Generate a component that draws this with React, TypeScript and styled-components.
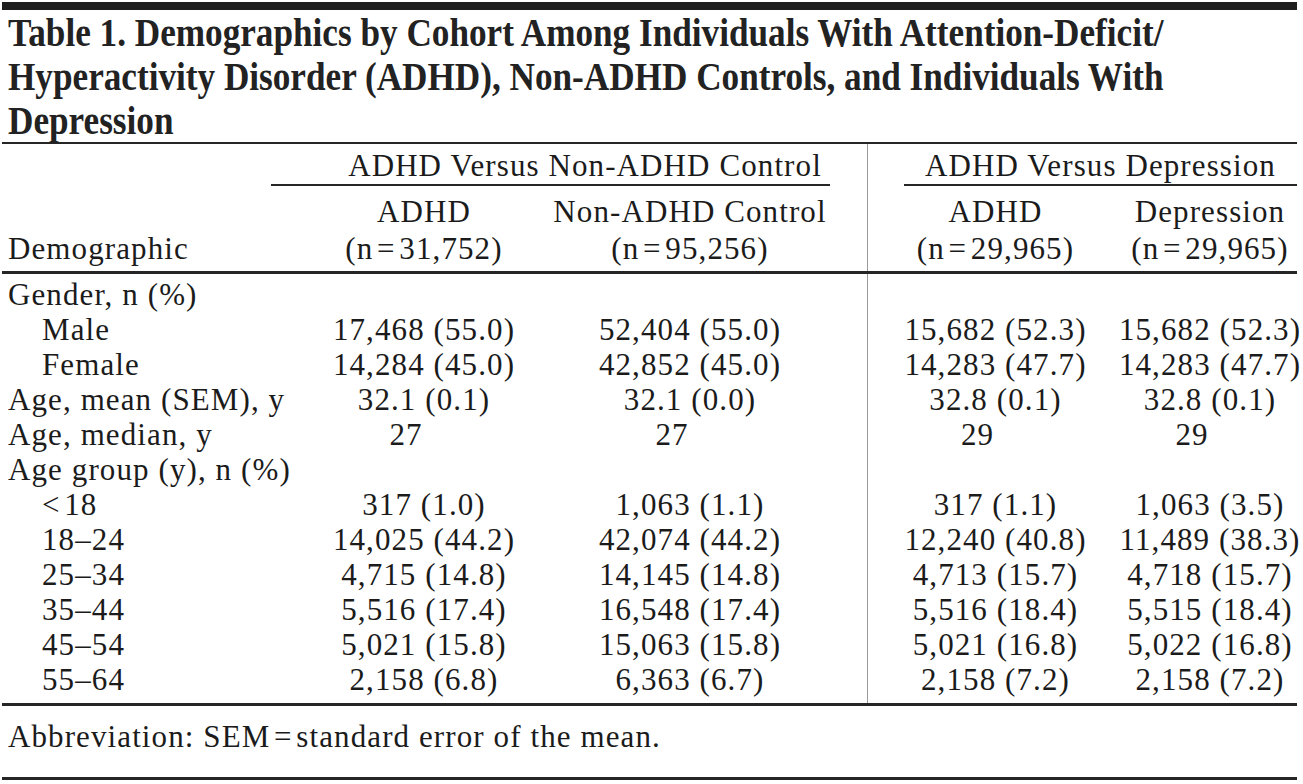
import styled, { createGlobalStyle } from "styled-components";

const GlobalStyle = createGlobalStyle`
  html, body {
    margin: 0;
    padding: 0;
    background: #ffffff;
  }
  body {
    font-family: "Liberation Serif", "Times New Roman", serif;
    color: #1b1b1b;
  }
`;

// label | ADHD | Non-ADHD | ADHD | Depression
const COLUMNS = "269px 306px 290px 256px 174px";

const Page = styled.div`
  width: 1295px;
  margin-left: 2px;
  padding-top: 2px;
  font-size: 31px;
  letter-spacing: 1.1px;
`;

const TopBar = styled.div`
  height: 8px;
  background: #1e1e1e;
`;

const Title = styled.h1`
  margin: 0;
  padding-left: 7px;
  font-size: 41px;
  font-weight: 700;
  line-height: 44px;
  letter-spacing: 0;
  white-space: nowrap;
  color: #222;
  transform: scaleX(0.858);
  transform-origin: left top;
`;

const TitleLine = styled.span`
  display: block;
`;

const Rule = styled.div<{ $weight: number }>`
  height: ${(p) => p.$weight}px;
  background: #262626;
`;

const HeadGrid = styled.div`
  display: grid;
  grid-template-columns: ${COLUMNS};
`;

const GroupCell = styled.div<{ $divided?: boolean }>`
  grid-column: ${(p) => (p.$divided ? "4 / 6" : "2 / 4")};
  padding: 4px ${(p) => (p.$divided ? "0" : "37px")} 4px ${(p) => (p.$divided ? "36px" : "0")};
  border-left: ${(p) => (p.$divided ? "1px solid #9a9a9a" : "none")};
`;

const GroupLabel = styled.div<{ $offset?: number }>`
  line-height: 35px;
  text-align: center;
  padding-left: ${(p) => p.$offset ?? 0}px;
  border-bottom: 2px solid #262626;
  padding-bottom: 1px;
`;

const Blank = styled.div``;

const DemoLabel = styled.div`
  grid-column: 1;
  display: flex;
  align-items: flex-end;
  padding: 0 0 4px 6px;
  line-height: 37px;
`;

const ColHead = styled.div<{ $divided?: boolean; $trail?: number }>`
  display: flex;
  flex-direction: column;
  align-items: center;
  padding: 3px ${(p) => p.$trail ?? 0}px 4px 0;
  line-height: 37px;
  white-space: nowrap;
  border-left: ${(p) => (p.$divided ? "1px solid #9a9a9a" : "none")};
`;

const Body = styled.div`
  display: grid;
  grid-template-columns: ${COLUMNS};
`;

const Column = styled.div<{ $divided?: boolean; $trail?: number }>`
  display: flex;
  flex-direction: column;
  padding: 3px ${(p) => p.$trail ?? 0}px 6px 0;
  border-left: ${(p) => (p.$divided ? "1px solid #9a9a9a" : "none")};
`;

const LabelCell = styled.div<{ $indent?: boolean }>`
  height: 35px;
  line-height: 35px;
  padding-left: ${(p) => (p.$indent ? 40 : 6)}px;
  white-space: nowrap;
`;

const ValueCell = styled.div<{ $shift?: number }>`
  height: 35px;
  line-height: 35px;
  display: flex;
  justify-content: center;
  padding-right: ${(p) => p.$shift ?? 0}px;
  white-space: nowrap;
`;

const Footnote = styled.div`
  padding: 13px 0 23px 6px;
  line-height: 35px;
`;

type Row = {
  label: string;
  indent?: boolean;
  values?: string[];
  shift?: number;
};

const rows: Row[] = [
  { label: "Gender, n (%)" },
  { label: "Male", indent: true, values: ["17,468 (55.0)", "52,404 (55.0)", "15,682 (52.3)", "15,682 (52.3)"] },
  { label: "Female", indent: true, values: ["14,284 (45.0)", "42,852 (45.0)", "14,283 (47.7)", "14,283 (47.7)"] },
  { label: "Age, mean (SEM), y", values: ["32.1 (0.1)", "32.1 (0.0)", "32.8 (0.1)", "32.8 (0.1)"] },
  { label: "Age, median, y", values: ["27", "27", "29", "29"], shift: 36 },
  { label: "Age group (y), n (%)" },
  { label: "<\u200A18", indent: true, values: ["317 (1.0)", "1,063 (1.1)", "317 (1.1)", "1,063 (3.5)"] },
  { label: "18–24", indent: true, values: ["14,025 (44.2)", "42,074 (44.2)", "12,240 (40.8)", "11,489 (38.3)"] },
  { label: "25–34", indent: true, values: ["4,715 (14.8)", "14,145 (14.8)", "4,713 (15.7)", "4,718 (15.7)"] },
  { label: "35–44", indent: true, values: ["5,516 (17.4)", "16,548 (17.4)", "5,516 (18.4)", "5,515 (18.4)"] },
  { label: "45–54", indent: true, values: ["5,021 (15.8)", "15,063 (15.8)", "5,021 (16.8)", "5,022 (16.8)"] },
  { label: "55–64", indent: true, values: ["2,158 (6.8)", "6,363 (6.7)", "2,158 (7.2)", "2,158 (7.2)"] },
];

const heads = [
  { name: "ADHD", n: "31,752" },
  { name: "Non-ADHD Control", n: "95,256", trail: 64 },
  { name: "ADHD", n: "29,965", divided: true },
  { name: "Depression", n: "29,965" },
];

export default function App() {
  return (
    <>
      <GlobalStyle />
      <Page>
        <TopBar />
        <Title>
          <TitleLine>Table 1. Demographics by Cohort Among Individuals With Attention-Deficit/</TitleLine>
          <TitleLine>Hyperactivity Disorder (ADHD), Non-ADHD Controls, and Individuals With</TitleLine>
          <TitleLine>Depression</TitleLine>
        </Title>
        <Rule $weight={2} />
        <HeadGrid>
          <Blank />
          <GroupCell>
            <GroupLabel $offset={69}>ADHD Versus Non-ADHD Control</GroupLabel>
          </GroupCell>
          <GroupCell $divided>
            <GroupLabel>ADHD Versus Depression</GroupLabel>
          </GroupCell>
          <DemoLabel>Demographic</DemoLabel>
          {heads.map((h, i) => (
            <ColHead key={`head_${i}`} $divided={h.divided} $trail={h.trail}>
              <span>{h.name}</span>
              <span>(n{"\u200A=\u200A"}{h.n})</span>
            </ColHead>
          ))}
        </HeadGrid>
        <Rule $weight={3} />
        <Body>
          <Column>
            {rows.map((r, i) => (
              <LabelCell key={`label_${i}`} $indent={r.indent}>
                {r.label}
              </LabelCell>
            ))}
          </Column>
          {heads.map((h, c) => (
            <Column key={`col_${c}`} $divided={h.divided} $trail={h.trail}>
              {rows.map((r, i) => (
                <ValueCell key={`cell_${c}_${i}`} $shift={r.shift}>
                  {r.values ? r.values[c] : ""}
                </ValueCell>
              ))}
            </Column>
          ))}
        </Body>
        <Rule $weight={3} />
        <Footnote>Abbreviation: SEM{"\u200A=\u200A"}standard error of the mean.</Footnote>
        <Rule $weight={3} />
      </Page>
    </>
  );
}
